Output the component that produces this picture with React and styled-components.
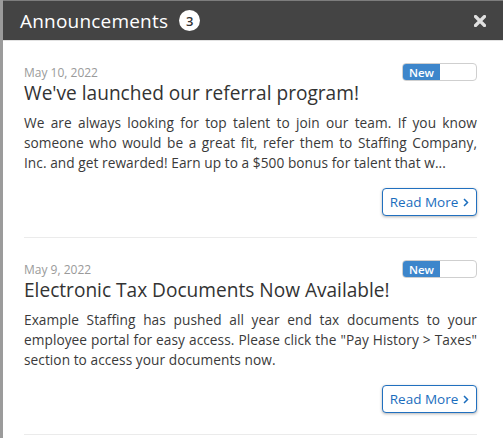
import React from 'react';
import styled, { createGlobalStyle } from 'styled-components';

const GlobalStyle = createGlobalStyle`
  html, body {
    margin: 0;
    padding: 0;
    background: #fff;
  }
  body {
    font-family: "Open Sans", "Liberation Sans", sans-serif;
  }
`;

const Panel = styled.div`
  width: 503px;
  height: 438px;
  overflow: hidden;
  border-left: 3px solid #9b9b9b;
  box-sizing: border-box;
  background: #fff;
`;

const Header = styled.div`
  height: 41px;
  margin-left: -3px;
  border-left: 3px solid #2b6fb8;
  border-top: 1px solid #7d7d7d;
  border-bottom: 1px solid #e2e2e2;
  box-sizing: border-box;
  background: #444444;
  display: flex;
  align-items: center;
  padding: 0 16px 0 17px;
`;

const HeaderTitle = styled.h1`
  margin: 0;
  font-size: 19px;
  font-weight: 400;
  color: #fff;
  letter-spacing: 0.2px;
`;

const Badge = styled.span`
  width: 21px;
  height: 21px;
  border-radius: 50%;
  background: #fff;
  color: #333;
  font-size: 13px;
  font-weight: 600;
  display: flex;
  align-items: center;
  justify-content: center;
  margin-left: 11px;
`;

const CloseButton = styled.button`
  margin-left: auto;
  border: 0;
  background: none;
  padding: 0;
  width: 14px;
  height: 14px;
  display: flex;
  align-items: center;
  justify-content: center;
  cursor: pointer;
`;

const List = styled.div`
  padding: 0 26px 0 21px;
`;

const Item = styled.article`
  padding: 22px 0 21px;
  border-bottom: 1px solid #ebebeb;
`;

const MetaRow = styled.div`
  height: 18px;
  display: flex;
  align-items: center;
  justify-content: space-between;
`;

const DateText = styled.span`
  font-size: 12px;
  color: #9a9a9a;
`;

const Toggle = styled.div`
  width: 75px;
  height: 18px;
  box-sizing: border-box;
  border: 1px solid #cfcfcf;
  border-radius: 4px;
  overflow: hidden;
  display: flex;
`;

const ToggleOn = styled.span`
  width: 37px;
  background: #3d86cb;
  color: #fff;
  font-size: 11.5px;
  font-weight: 600;
  display: flex;
  align-items: center;
  justify-content: center;
`;

const Title = styled.h2`
  margin: 0;
  font-size: 19.1px;
  line-height: 24px;
  font-weight: 400;
  color: #333;
`;

const Body = styled.p`
  margin: 8px 0 0;
  font-size: 13.7px;
  line-height: 20px;
  letter-spacing: 0.05px;
  color: #3a3a3a;
  text-align: justify;
`;

const Actions = styled.div`
  display: flex;
  justify-content: flex-end;
  margin-top: 15px;
`;

const ReadMore = styled.button`
  width: 95px;
  height: 28px;
  box-sizing: border-box;
  border: 1px solid #2170bf;
  border-radius: 4px;
  background: #fff;
  color: #1b6dbd;
  font-family: inherit;
  font-size: 13.5px;
  box-shadow: 0 1px 3px rgba(0, 0, 0, 0.3);
  display: flex;
  align-items: center;
  justify-content: center;
  gap: 5px;
  padding: 0;
  cursor: pointer;
`;

const items = [
  {
    date: 'May 10, 2022',
    title: "We've launched our referral program!",
    body: 'We are always looking for top talent to join our team. If you know someone who would be a great fit, refer them to Staffing Company, Inc. and get rewarded! Earn up to a $500 bonus for talent that w...',
  },
  {
    date: 'May 9, 2022',
    title: 'Electronic Tax Documents Now Available!',
    body: 'Example Staffing has pushed all year end tax documents to your employee portal for easy access. Please click the "Pay History > Taxes" section to access your documents now.',
  },
];

function CloseIcon() {
  return (
    <svg width="12" height="12" viewBox="0 0 12 12">
      <path d="M1.5 1.5 L10.5 10.5 M10.5 1.5 L1.5 10.5" stroke="#e0e0e0" strokeWidth="3.2" strokeLinecap="round" />
    </svg>
  );
}

function Chevron() {
  return (
    <svg width="6" height="9" viewBox="0 0 6 9">
      <path d="M1 1 L4.5 4.5 L1 8" fill="none" stroke="#1b6dbd" strokeWidth="1.5" />
    </svg>
  );
}

export default function App() {
  return (
    <>
      <GlobalStyle />
      <Panel>
        <Header>
          <HeaderTitle>Announcements</HeaderTitle>
          <Badge>3</Badge>
          <CloseButton aria-label="Close">
            <CloseIcon />
          </CloseButton>
        </Header>
        <List>
          {items.map((it) => (
            <Item key={it.title}>
              <MetaRow>
                <DateText>{it.date}</DateText>
                <Toggle>
                  <ToggleOn>New</ToggleOn>
                </Toggle>
              </MetaRow>
              <Title>{it.title}</Title>
              <Body>{it.body}</Body>
              <Actions>
                <ReadMore>
                  Read More <Chevron />
                </ReadMore>
              </Actions>
            </Item>
          ))}
        </List>
      </Panel>
    </>
  );
}
